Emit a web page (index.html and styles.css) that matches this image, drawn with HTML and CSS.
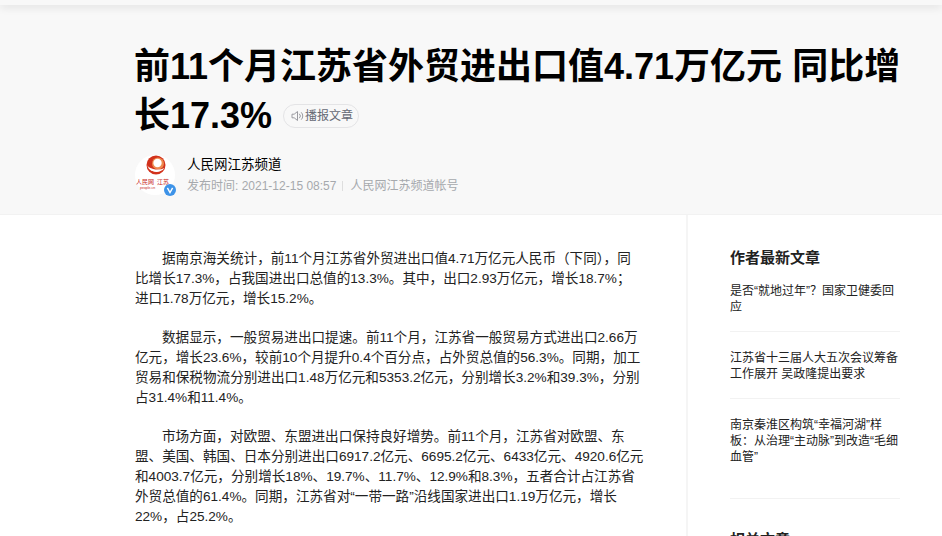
FILE: index.html
```html
<!DOCTYPE html>
<html lang="zh-CN">
<head>
    <meta charset="UTF-8">
    <title>前11个月江苏省外贸进出口值4.71万亿元 同比增长17.3%</title>
    <link rel="stylesheet" href="styles.css">
</head>
<body>
    <div class="top-bar"></div>

    <header class="article-head">
        <h1 class="title">前11个月江苏省外贸进出口值4.71万亿元 同比增长17.3%<span class="listen"><svg class="listen-icon" viewBox="0 0 14 12" width="14" height="12"><path d="M1 4.2h2.2L6.5 1.5v9L3.2 7.8H1z" fill="none" stroke="#9a9aa0" stroke-width="1"/><path d="M8.3 3.8a3 3 0 0 1 0 4.4M10.2 2.3a5.2 5.2 0 0 1 0 7.4" fill="none" stroke="#9a9aa0" stroke-width="1"/></svg>播报文章</span></h1>

        <div class="author">
            <div class="avatar">
                <svg viewBox="0 0 40 40" width="40" height="40">
                    <circle cx="20" cy="20" r="20" fill="#fff"/>
                    <circle cx="21" cy="10" r="9.5" fill="#d2311b"/>
                    <circle cx="23" cy="8.5" r="6" fill="#ee8a4f"/>
                    <circle cx="22.5" cy="8" r="4.2" fill="#fff"/>
                    <path d="M12.5 9a9 7 0 0 0 17 4a10 5 0 0 1-17-4z" fill="#fff"/>
                    <path d="M14.5 14a8 5 0 0 0 12 1.5a9 3.5 0 0 1-12-1.5z" fill="#fff"/>
                    <text x="1" y="29" class="logo-text">人民网</text>
                    <text x="22" y="29" class="logo-text">江苏</text>
                    <text x="5" y="33.5" class="logo-small">people.cn</text>
                </svg>
                <span class="badge">
                    <svg viewBox="0 0 12 12" width="12" height="12"><circle cx="6" cy="6" r="6" fill="#3d93e8"/><path d="M3.4 3.8L6 8.6l2.6-4.8" fill="none" stroke="#fff" stroke-width="1.4"/></svg>
                </span>
            </div>
            <div class="author-info">
                <div class="author-name">人民网江苏频道</div>
                <div class="author-meta">发布时间: 2021-12-15 08:57<span class="sep"></span>人民网江苏频道帐号</div>
            </div>
        </div>
    </header>

    <main class="layout">
        <article class="article-body">
            <p>据南京海关统计，前11个月江苏省外贸进出口值4.71万亿元人民币（下同），同比增长17.3%，占我国进出口总值的13.3%。其中，出口2.93万亿元，增长18.7%；进口1.78万亿元，增长15.2%。</p>
            <p>数据显示，一般贸易进出口提速。前11个月，江苏省一般贸易方式进出口2.66万亿元，增长23.6%，较前10个月提升0.4个百分点，占外贸总值的56.3%。同期，加工贸易和保税物流分别进出口1.48万亿元和5353.2亿元，分别增长3.2%和39.3%，分别占31.4%和11.4%。</p>
            <p>市场方面，对欧盟、东盟进出口保持良好增势。前11个月，江苏省对欧盟、东盟、美国、韩国、日本分别进出口6917.2亿元、6695.2亿元、6433亿元、4920.6亿元和4003.7亿元，分别增长18%、19.7%、11.7%、12.9%和8.3%，五者合计占江苏省外贸总值的61.4%。同期，江苏省对“一带一路”沿线国家进出口1.19万亿元，增长22%，占25.2%。</p>
        </article>

        <aside class="sidebar">
            <h2 class="side-title">作者最新文章</h2>
            <ul class="side-list">
                <li class="side-item">是否“就地过年”？国家卫健委回应</li>
                <li class="side-item">江苏省十三届人大五次会议筹备工作展开 吴政隆提出要求</li>
                <li class="side-item side-item-tall">南京秦淮区构筑“幸福河湖”样板：从治理“主动脉”到改造“毛细血管”</li>
            </ul>
            <h2 class="side-title side-title-next">相关文章</h2>
        </aside>
    </main>
</body>
</html>
```

FILE: styles.css
```css
html, body {
    height: 536px;
    overflow: hidden;
}

body {
    margin: 0;
    background-color: #fff;
    color: #222;
    font-family: "Liberation Sans", "Noto Sans CJK SC", sans-serif;
}

.top-bar {
    height: 5px;
    background-color: #f8f8f8;
    box-shadow: 0 2px 8px rgba(0, 0, 0, 0.12);
    position: relative;
}

.article-head {
    height: 210px;
    box-sizing: border-box;
    padding: 37px 30px 0 134px;
    background-color: #f8f8f8;
    border-bottom: 1px solid #f2f2f2;
}

.title {
    margin: 0;
    font-size: 36px;
    line-height: 49px;
    font-weight: bold;
    color: #000;
}

.listen {
    display: inline-flex;
    align-items: center;
    vertical-align: 6px;
    height: 22px;
    margin-left: 11px;
    padding: 0 5px 0 7px;
    border: 1px solid #e4e4e6;
    border-radius: 12px;
    background-color: #f8f8f8;
    font-size: 12px;
    line-height: 22px;
    font-weight: normal;
    color: #666a75;
}

.author {
    display: flex;
    margin-top: 15px;
    margin-left: 1px;
}

.avatar {
    position: relative;
    width: 40px;
    height: 40px;
}

.logo-text {
    font-size: 6px;
    fill: #c8281c;
}

.logo-small {
    font-size: 3.5px;
    fill: #c8281c;
}

.badge {
    position: absolute;
    right: -1px;
    bottom: -1px;
    display: flex;
}

.author-info {
    margin-left: 12px;
    padding-top: 1px;
}

.author-name {
    font-size: 13.5px;
    line-height: 18px;
    color: #000;
}

.author-meta {
    display: flex;
    align-items: center;
    margin-top: 3px;
    font-size: 12px;
    line-height: 18px;
    color: #a6a9ad;
}

.sep {
    width: 1px;
    height: 10px;
    margin: 0 7px 0 6px;
    background-color: #dedede;
}

.layout {
    display: flex;
}

.article-body {
    width: 509px;
    padding: 34px 42px 0 135px;
    font-size: 13.6px;
    line-height: 20px;
    color: #222;
}

.article-body p {
    margin: 0 0 19px;
    text-indent: 27px;
}

.sidebar {
    width: 170px;
    min-height: 321px;
    padding: 33px 42px 0 42px;
    border-left: 2px solid #f5f5f5;
}

.side-title {
    margin: 0;
    font-size: 15px;
    line-height: 20px;
    font-weight: bold;
    color: #222;
}

.side-title-next {
    margin-top: 31px;
}

.side-list {
    margin: 15px 0 0;
    padding: 0;
    list-style: none;
}

.side-item {
    height: 49px;
    box-sizing: border-box;
    border-bottom: 1px solid #f2f2f2;
    font-size: 12px;
    line-height: 16px;
    color: #222;
}

.side-item + .side-item {
    height: 67px;
    padding-top: 18px;
}

.side-item + .side-item-tall {
    height: 100px;
}
```
